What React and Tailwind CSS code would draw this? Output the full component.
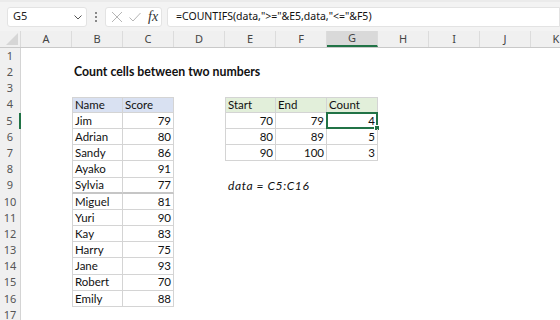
import React from "react";

const COLS = ["A", "B", "C", "D", "E", "F", "G", "H", "I", "J", "K"];

const names = [
  ["Jim", 79],
  ["Adrian", 80],
  ["Sandy", 86],
  ["Ayako", 91],
  ["Sylvia", 77],
  ["Miguel", 81],
  ["Yuri", 90],
  ["Kay", 83],
  ["Harry", 75],
  ["Jane", 93],
  ["Robert", 70],
  ["Emily", 88],
];

const ranges = [
  [70, 79, 4],
  [80, 89, 5],
  [90, 100, 3],
];

function cellContent(r, c) {
  if (r === 2 && c === "B")
    return { text: "Count cells between two numbers", cls: "font-bold whitespace-nowrap text-[12.3px]" };
  if (r === 9 && c === "E")
    return { text: "data = C5:C16", cls: "italic whitespace-nowrap text-[12px] tracking-[0.6px] pl-[1px]" };
  if (r === 4 && c === "B") return { text: "Name", hdr: "blue" };
  if (r === 4 && c === "C") return { text: "Score", hdr: "blue" };
  if (r === 4 && c === "E") return { text: "Start", hdr: "green" };
  if (r === 4 && c === "F") return { text: "End", hdr: "green" };
  if (r === 4 && c === "G") return { text: "Count", hdr: "green" };
  if (r >= 5 && r <= 16 && c === "B") return { text: names[r - 5][0] };
  if (r >= 5 && r <= 16 && c === "C") return { text: String(names[r - 5][1]), right: true };
  if (r >= 5 && r <= 7 && c === "E") return { text: String(ranges[r - 5][0]), right: true };
  if (r >= 5 && r <= 7 && c === "F") return { text: String(ranges[r - 5][1]), right: true };
  if (r >= 5 && r <= 7 && c === "G") return { text: String(ranges[r - 5][2]), right: true };
  return null;
}

function borderCls(r, c) {
  const inLeft = r >= 4 && r <= 16 && (c === "B" || c === "C");
  const inRight = r >= 4 && r <= 7 && (c === "E" || c === "F" || c === "G");
  if (!inLeft && !inRight) return "";
  let cls = "border-[#d4d4d4] border-r ";
  cls += r === 9 && inLeft ? "border-b-2 border-b-[#c6c6c6] " : "border-b ";
  if (r === 4) cls += "border-t ";
  if (c === "B" || c === "E") cls += "border-l ";
  return cls;
}

function Cell({ r, c }) {
  const info = cellContent(r, c);
  const b = borderCls(r, c);
  let bg = "";
  if (info && info.hdr === "blue") bg = "bg-[#d9e1f2]";
  if (info && info.hdr === "green") bg = "bg-[#e2efda]";
  const selected = r === 5 && c === "G";
  return (
    <div
      className={`relative w-[51px] shrink-0 h-full flex items-center ${
        info && info.right ? "justify-end pr-[2px]" : "pl-[2px]"
      } ${b} ${bg}`}
    >
      {info && (
        <span className={`leading-none text-[#111] ${info.cls || "text-[11.5px]"}`}>{info.text}</span>
      )}
      {selected && (
        <div className="absolute -left-[1px] -top-[1px] -right-[1px] -bottom-[1px] border-2 border-[#217346] pointer-events-none">
          <div className="absolute -right-[4px] -bottom-[4px] w-[6px] h-[6px] bg-[#217346] border border-white" />
        </div>
      )}
    </div>
  );
}

function Toolbar() {
  return (
    <div className="h-[31px] bg-[#f3f3f3] flex items-center pl-[7px] border-t-2 border-[#ebebeb]">
      <div className="w-[80px] h-[20px] bg-white rounded-[3px] border border-[#e3e3e3] flex items-center justify-between pl-[5px] pr-[3px]">
        <span className="text-[11px] text-[#222]" style={{ fontFamily: '"Noto Sans", sans-serif' }}>G5</span>
        <svg width="10" height="10" viewBox="0 0 10 10">
          <path d="M1.5 3.5 L5 7 L8.5 3.5" fill="none" stroke="#555" strokeWidth="1" />
        </svg>
      </div>
      <div className="w-[18px] flex flex-col items-center justify-center gap-[2px]">
        <div className="w-[2px] h-[2px] bg-[#888]" />
        <div className="w-[2px] h-[2px] bg-[#888]" />
        <div className="w-[2px] h-[2px] bg-[#888]" />
      </div>
      <div className="w-[57px] h-[20px] bg-white rounded-[3px] border border-[#e3e3e3] flex items-center pl-[3px]">
        <svg width="14" height="14" viewBox="0 0 14 14" className="ml-[1px]">
          <path d="M2 2 L12 12 M12 2 L2 12" stroke="#b5b5b5" strokeWidth="1" fill="none" />
        </svg>
        <svg width="14" height="14" viewBox="0 0 14 14" className="ml-[4px]">
          <path d="M1.5 7.5 L5 11 L12.5 3" stroke="#b5b5b5" strokeWidth="1" fill="none" />
        </svg>
        <span
          className="ml-[6px] text-[14px] italic text-[#333] leading-none"
          style={{ fontFamily: '"Liberation Serif", serif' }}
        >
          fx
        </span>
      </div>
      <div className="ml-[5px] flex-1 h-[20px] bg-white rounded-l-[3px] border border-[#e3e3e3] flex items-center pl-[8px]">
        <span className="text-[10.5px] text-[#111] whitespace-nowrap" style={{ fontFamily: '"Noto Sans", sans-serif' }}>
          =COUNTIFS(data,"&gt;="&amp;E5,data,"&lt;="&amp;F5)
        </span>
      </div>
    </div>
  );
}

export default function App() {
  const rows = Array.from({ length: 17 }, (_, i) => i + 1);
  return (
    <div
      className="w-[560px] h-[320px] overflow-hidden bg-white relative"
      style={{ fontFamily: '"Lato", "Noto Sans", sans-serif' }}
    >
      <Toolbar />
      <div
        className="h-[17px] flex bg-[#f0f0f0] border-b border-[#c9c9c9]"
        style={{ fontFamily: '"Noto Sans", sans-serif' }}
      >
        <div className="w-[21px] shrink-0 h-full relative border-r border-[#dadada]">
          <svg width="12" height="12" viewBox="0 0 12 12" className="absolute right-[2px] bottom-[2px]">
            <path d="M12 0 L12 12 L0 12 Z" fill="#d6d6d6" />
          </svg>
        </div>
        {COLS.map((c) => (
          <div
            key={c}
            className={`w-[51px] shrink-0 h-full flex items-center justify-center text-[11px] text-[#444] border-r border-[#dcdcdc] ${
              c === "G" ? "bg-[#d9d9d9] border-b-2 border-b-[#217346]" : ""
            }`}
          >
            {c}
          </div>
        ))}
      </div>
      {rows.map((r) => (
        <div key={r} className="h-[16.2px] flex">
          <div
            className={`w-[21px] shrink-0 h-full flex items-center justify-center text-[11px] text-[#555] bg-[#f0f0f0] ${
              r === 5 ? "bg-[#dedede] border-r-2 border-[#217346]" : "border-r border-[#d4d4d4]"
            }`}
            style={{ fontFamily: '"Noto Sans", sans-serif' }}
          >
            {r}
          </div>
          {COLS.map((c) => (
            <Cell key={c} r={r} c={c} />
          ))}
        </div>
      ))}
    </div>
  );
}
